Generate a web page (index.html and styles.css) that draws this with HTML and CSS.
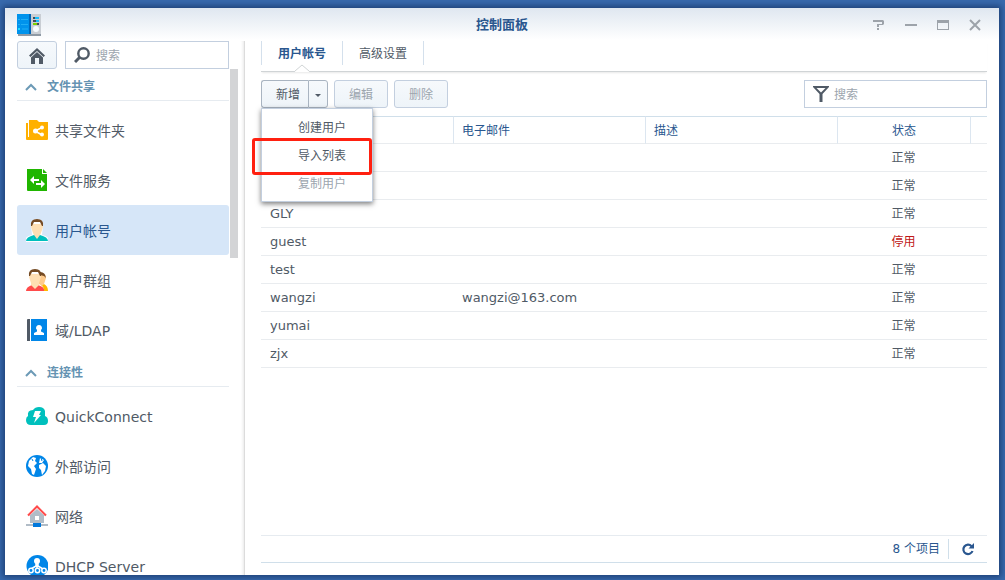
FILE: index.html
```html
<!DOCTYPE html>
<html lang="zh-CN">
<head>
<meta charset="utf-8">
<title>控制面板</title>
<link rel="stylesheet" href="styles.css">
</head>
<body>
<div class="window">
  <header class="titlebar">
    <svg class="app-icon" width="25" height="22" viewBox="0 0 25 22">
      <path d="M1 20h23v2H1z" fill="#8f9aa5"/>
      <path d="M0 0h14v20H0z" fill="#0093ec"/><path d="M12 0h2v20h-2z" fill="#0067b8"/>
      <path d="M1 5.500h2M4 5.500h7M1 10.500h2M4 10.500h7M5 15h6" stroke="#20aef5" stroke-width="1"/><path d="M1 14h2v2H1z" fill="#1ddcff"/>
      <path d="M14 0h10v20H14z" fill="#c9ced4"/>
      <path d="M16 4h6M16 7h6M16 10h6" stroke="#424d59" stroke-width="2"/>
      <path d="M18 4h4M19 7h3" stroke="#13bfff" stroke-width="2"/><path d="M16 10h4" stroke="#7ad000" stroke-width="2"/>
      <circle cx="19" cy="15" r="3" fill="#f5fbff"/>
    </svg>
    <h1 class="title">控制面板</h1>
    <div class="window-controls">
      <button class="control" aria-label="帮助"><svg width="12" height="12" viewBox="0 0 12 12"><path d="M0 1h10l1 1v3l-1 1H6v2H4V5h5V3H0zM4 9h2v2H4z" fill="#9da3aa"/></svg></button>
      <button class="control" aria-label="最小化"><svg width="12" height="12" viewBox="0 0 12 12"><path d="M0 6h12" stroke="#9da3aa" stroke-width="2"/></svg></button>
      <button class="control" aria-label="最大化"><svg width="12" height="12" viewBox="0 0 12 12"><path d="M0 1h12v10H0zM1 4v6h10V4z" fill="#9da3aa" fill-rule="evenodd"/></svg></button>
      <button class="control" aria-label="关闭"><svg width="12" height="12" viewBox="0 0 12 12"><path d="M1 1l10 10M11 1L1 11" stroke="#9da3aa" stroke-width="2"/></svg></button>
    </div>
  </header>
  <div class="content">
    <aside class="sidebar">
      <div class="side-tools">
        <button class="button home" aria-label="主页"><svg width="16" height="16" viewBox="0 0 16 16"><path d="M8 0l8 7.500-1.500 1.500L8 3 1.500 9 0 7.500z" fill="#505a66"/><path d="M8 4l6 5.500V16h-4v-6H6v6H2V9.500z" fill="#505a66"/></svg></button>
        <label class="search">
          <svg width="16" height="16" viewBox="0 0 16 16"><circle cx="9.500" cy="6.500" r="5.200" fill="none" stroke="#505a66" stroke-width="2.400"/><path d="M5.500 10.500L1 15" stroke="#505a66" stroke-width="3"/></svg>
          <input type="text" placeholder="搜索" aria-label="搜索设置">
        </label>
      </div>
      <div class="side-scroll">
        <nav class="side-list">
          <button class="group"><svg width="12" height="8" viewBox="0 0 12 8"><path d="M1 7l5-5 5 5" fill="none" stroke="#6c9ab6" stroke-width="2"/></svg>文件共享</button>
          <ul class="items">
            <li><a class="item" href="#share"><svg width="22" height="22" viewBox="0 0 22 22"><path d="M0 4h2v16H0zM3 1h8l2 2h9v17q0 1-1 1H3z" fill="#ffb000"/><path d="M0 18h3v3H1q-1 0-1-1z" fill="#ffb000"/><path d="M16 8.500L9 12l7 4" fill="none" stroke="#fff" stroke-width="1.500"/><circle cx="9.500" cy="12" r="2.500" fill="#fff"/><circle cx="16" cy="8.500" r="2" fill="#fff"/><circle cx="16" cy="15.500" r="2" fill="#fff"/></svg>共享文件夹</a></li>
            <li><a class="item" href="#files"><svg width="22" height="22" viewBox="0 0 22 22"><path d="M1 0h15v5h5v17H2q-1 0-1-1z" fill="#20b600"/><path d="M17 0l4 4h-4z" fill="#20b600"/><path d="M4 11l4-4v3h5v2H8v3zM19 15l-4-4v3h-5v2h5v3z" fill="#fff"/></svg>文件服务</a></li>
            <li><a class="item selected" href="#users" aria-current="page"><svg width="22" height="24" viewBox="0 0 22 24"><path d="M-1 24v-3q2-3 7-4L5 7q0-6 6-6t6 6l-1 10q5 1 7 4v3z" fill="#fff"/><path d="M0 23q0-4 8-6h6q8 2 8 6z" fill="#00bfbd"/><path d="M6 6h10l1 3-2 6-1 2-3 4-3-4-1-2-2-6z" fill="#ffdfb3"/><path d="M5 8q-1-7 6-7t6 7h-1l-2-4H8L6 8z" fill="#754b24"/></svg>用户帐号</a></li>
            <li><a class="item" href="#groups"><svg width="22" height="24" viewBox="0 0 22 24"><path d="M15 17l3-1q4 2 4 7h-4q0-4-3-6z" fill="#ffb700"/><path d="M13 6h6l1 4-2 6-2 2-3-2z" fill="#ffcb8c"/><path d="M13 4q6-1 7 6l-2-2-4-1z" fill="#754b24"/><path d="M0 23q0-4 6-6h6q7 2 6 6z" fill="#ff4b4b"/><path d="M4 6h10l1 3-2 6v2l-4 4-4-4v-2L3 9z" fill="#ffdfb3"/><path d="M3 8Q2 1 9 1t6 7h-1l-2-4H6L4 8z" fill="#754b24"/></svg>用户群组</a></li>
            <li><a class="item" href="#ldap"><svg width="22" height="22" viewBox="0 0 22 22"><path d="M2 0h2v22H1V1q0-1 1-1z" fill="#505a66"/><path d="M5 0h16v22H5z" fill="#0086e8"/><path d="M8 16v-2l3-1.500v-1.500l-1-1.500q0-3.500 3-3.500t3 3.500l-1 1.500v1.500l3 1.500v2z" fill="#fff"/></svg>域/LDAP</a></li>
          </ul>
          <button class="group"><svg width="12" height="8" viewBox="0 0 12 8"><path d="M1 7l5-5 5 5" fill="none" stroke="#6c9ab6" stroke-width="2"/></svg>连接性</button>
          <ul class="items">
            <li><a class="item" href="#quickconnect"><svg width="22" height="20" viewBox="0 0 22 20"><path d="M5 19q-5 0-5-5 0-3 2-4Q1 4 7 4q2-3 6-3 5 0 6 4v5q3 1 3 5 0 4-4 4z" fill="#00c0bd"/><path d="M9 5h6l-2 4h2l-7 8 2-6H7z" fill="#fff"/></svg>QuickConnect</a></li>
            <li><a class="item" href="#external"><svg width="22" height="22" viewBox="0 0 22 22"><circle cx="11" cy="11" r="11" fill="#0086e8"/><path d="M3 6l4-4 3 1-1 3 2 2-3 3 2 3-2 6-2-1-1-5-3-3zM14 3l4 2-2 3h-3zM13 10l4-2 3 3-1 5-3 4-1-5-2-2z" fill="#fff"/><path d="M6 4l1 2M15 3l1 3" stroke="#0086e8"/></svg>外部访问</a></li>
            <li><a class="item" href="#network"><svg width="22" height="22" viewBox="0 0 22 22"><path d="M11 4l8 7h-1v7H4v-7H3z" fill="#b1bcc7"/><path d="M9 11h4v4H9z" fill="#fff"/><path d="M2 10.500l9-9 9 9" fill="none" stroke="#ff4b4b" stroke-width="2"/><path d="M0 20h22" stroke="#b1bcc7" stroke-width="2"/><path d="M7 18h8v4H7z" fill="#0078dc"/></svg>网络</a></li>
            <li><a class="item" href="#dhcp"><svg width="22" height="22" viewBox="0 0 22 22"><circle cx="11.500" cy="11" r="11" fill="#0086e8"/><circle cx="11" cy="6" r="3" fill="#fff"/><path d="M10 7v4l-5 3M12 7v4l5 3M11 7v8" fill="none" stroke="#fff" stroke-width="1.500"/><g fill="#0086e8" stroke="#fff" stroke-width="1.500"><circle cx="5" cy="15.500" r="2.200"/><circle cx="11.500" cy="15.500" r="2.200"/><circle cx="18" cy="15.500" r="2.200"/></g></svg>DHCP Server</a></li>
          </ul>
        </nav>
        <div class="scroll-thumb"></div>
      </div>
    </aside>
    <main class="main">
      <div class="tabs" role="tablist">
        <button class="tab active" role="tab" aria-selected="true">用户帐号<svg class="notch" width="14" height="8" viewBox="0 0 14 8"><path d="M0 7l7-6 7 6v1H0z" fill="#fff"/><path d="M0 7l7-6 7 6" fill="none" stroke="#d0d4d6"/></svg></button>
        <button class="tab" role="tab" aria-selected="false">高级设置</button>
      </div>
      <div class="toolbar">
        <div class="split">
          <button class="button create">新增</button><button class="button arrow" aria-label="更多" aria-expanded="true"><svg width="6" height="3" viewBox="0 0 6 3"><path d="M0 0h6L3 3z" fill="#505a66"/></svg></button>
          <div class="menu">
            <button class="menu-item">创建用户</button>
            <button class="menu-item marked">导入列表</button>
            <button class="menu-item" disabled>复制用户</button>
          </div>
        </div>
        <button class="button" disabled>编辑</button>
        <button class="button" disabled>删除</button>
        <label class="search filter">
          <svg width="16" height="16" viewBox="0 0 16 16"><path d="M0 0h16v1L9.500 8v8h-3V8L0 1z" fill="#505a66"/><path d="M3.500 2h9L8 6.500z" fill="#fff"/></svg>
          <input type="text" placeholder="搜索" aria-label="搜索用户">
        </label>
      </div>
      <div class="grid">
        <table class="users">
          <colgroup><col><col><col><col class="status-col"><col class="end-col"></colgroup>
          <thead><tr><th></th><th>电子邮件</th><th>描述</th><th class="status">状态</th><th></th></tr></thead>
          <tbody>
            <tr><td></td><td></td><td></td><td class="status">正常</td><td></td></tr>
            <tr><td></td><td></td><td></td><td class="status">正常</td><td></td></tr>
            <tr><td>GLY</td><td></td><td></td><td class="status">正常</td><td></td></tr>
            <tr><td>guest</td><td></td><td></td><td class="status off">停用</td><td></td></tr>
            <tr><td>test</td><td></td><td></td><td class="status">正常</td><td></td></tr>
            <tr><td>wangzi</td><td>wangzi@163.com</td><td></td><td class="status">正常</td><td></td></tr>
            <tr><td>yumai</td><td></td><td></td><td class="status">正常</td><td></td></tr>
            <tr><td>zjx</td><td></td><td></td><td class="status">正常</td><td></td></tr>
          </tbody>
        </table>
      </div>
      <footer class="pager">
        <span class="count">8 个项目</span>
        <button class="refresh" aria-label="刷新"><svg width="14" height="14" viewBox="0 0 14 14"><path d="M10.500 4.200A4.700 4.700 0 1 0 11.500 9" fill="none" stroke="#2a578f" stroke-width="2.200"/><path d="M13 1v5.500H7.500z" fill="#2a578f"/></svg></button>
      </footer>
    </main>
  </div>
</div>
</body>
</html>
```
FILE: styles.css
```css
* { box-sizing: border-box; }
body {
  margin: 0;
  height: 100vh;
  padding: 8px 6px 5px 5px;
  background: #386aad;
  font: 12px/16px "DejaVu Sans", "Noto Sans CJK SC", sans-serif;
  color: #505a66;
}
button, input { font: inherit; color: inherit; margin: 0; padding: 0; border: 0; background: none; }
svg { display: block; flex: none; }

.window {
  height: 100%;
  display: flex;
  flex-direction: column;
  background: linear-gradient(#dfe7f0, #fff 32px);
  box-shadow: 0 0 6px 2px rgba(10, 35, 80, .6);
  overflow: hidden;
}
.titlebar {
  display: grid;
  grid-template-columns: 1fr auto 1fr;
  align-items: center;
  height: 33px;
  padding: 0 12px;
  flex: none;
}
.title { margin: 0; font-size: 13px; line-height: 16px; font-weight: 700; color: #2a578f; }
.window-controls { display: flex; justify-content: flex-end; gap: 20px; padding-right: 6px; }
.content { display: flex; flex: 1; min-height: 0; }

.sidebar {
  display: flex;
  flex-direction: column;
  width: 240px;
  flex: none;
  padding-left: 12px;
  border-right: 1px solid #dcdcdc;
  box-shadow: inset -3px 0 3px -2px #e8e8e8;
}
.side-tools { display: flex; gap: 8px; padding-right: 15px; flex: none; }
.button {
  height: 28px;
  min-width: 54px;
  display: flex;
  align-items: center;
  justify-content: center;
  padding-top: 2px;
  border: 1px solid #c3cfdf;
  border-radius: 3px;
  background: linear-gradient(#f6f9fc, #eef4f9);
}
.button:disabled { color: #9ca5ae; }
.button.home { min-width: 40px; }
.search {
  display: flex;
  align-items: center;
  gap: 6px;
  flex: 1;
  min-width: 0;
  height: 28px;
  padding: 0 8px;
  border: 1px solid #c3cfdf;
  background: #fff;
}
.search input { flex: 1; width: 0; min-width: 0; padding-top: 2px; outline: 0; }
.search input::placeholder { color: #9ca5ae; opacity: 1; }

.side-scroll { display: flex; gap: 1px; flex: 1; min-height: 0; overflow: hidden; }
.side-list { flex: 1; }
.scroll-thumb { width: 8px; height: 189px; margin-right: 6px; background: #d3d4d6; }
.group {
  display: flex;
  align-items: center;
  gap: 10px;
  width: 100%;
  height: 32px;
  padding: 5px 8px 0;
  border-bottom: 1px solid #e6ebf0;
  color: #6593b2;
  font-weight: 700;
}
.items { list-style: none; margin: 0; padding: 4px 0 0; }
.item {
  display: flex;
  align-items: center;
  gap: 7px;
  height: 50px;
  padding: 2px 0 0 9px;
  border-radius: 3px;
  font-size: 14px;
  color: inherit;
  text-decoration: none;
}
.item svg { margin-bottom: 2px; }
.item.selected { background: #d6e6f8; color: #2a578f; }

.main { flex: 1; min-width: 0; display: flex; flex-direction: column; padding: 0 12px 12px 16px; }
.tabs { display: flex; height: 31px; border-bottom: 1px solid #d0d4d6; box-shadow: 0 2px 2px -1px #e8e8e8; flex: none; }
.tab { position: relative; height: 24px; padding: 2px 16px 0; border-right: 1px solid #d4e0ec; }
.tab.active { border-left: 1px solid #d4e0ec; color: #2a578f; font-weight: 700; }
.notch { position: absolute; left: 50%; margin-left: -7px; bottom: -7px; }
.toolbar { display: flex; gap: 6px; padding: 8px 0; flex: none; }
.split { position: relative; display: flex; }
.split .button { border-color: #a9b4c1; }
.create { border-radius: 3px 0 0 3px; border-right: 0; min-width: 47px; padding-left: 6px; }
.button.arrow { min-width: 20px; border-radius: 0 3px 3px 0; }
.menu {
  position: absolute;
  top: 100%;
  left: 0;
  z-index: 1;
  width: 112px;
  padding: 4px 0;
  border: 1px solid #c3cfdf;
  background: #fff;
  box-shadow: 0 2px 5px rgba(0, 0, 0, .5);
}
.menu-item { position: relative; display: block; width: 100%; height: 28px; padding: 2px 0 0 36px; text-align: left; }
.menu-item:disabled { color: #9ca5ae; }
.marked::after {
  content: "";
  position: absolute;
  z-index: 1;
  inset: -3px 0 -6px -10px;
  border: 3px solid #ff2010;
  border-radius: 3px;
}
.search.filter { flex: 0 1 183px; margin-left: auto; gap: 5px; }

.grid { flex: 1; min-height: 0; overflow: hidden; }
.users { width: 100%; table-layout: fixed; border-collapse: separate; border-spacing: 0; }
.status-col { width: 133px; }
.end-col { width: 17px; }
.users th, .users td { height: 28px; border-bottom: 1px solid #e9ecef; text-align: left; }
.users td { padding: 0 9px; font-size: 13px; }
.users th { padding: 1px 8px 0; border-top: 1px solid #d0dfea; border-left: 1px solid #dce6f0; color: #2a578f; font-weight: 400; }
.users th:first-child { border-left: 0; }
.users .status { text-align: center; font-size: 12px; }
.users .off { color: #c01818; }
.pager {
  display: flex;
  align-items: center;
  justify-content: flex-end;
  height: 28px;
  border-top: 1px solid #e6ebf0;
  border-bottom: 1px solid #d0dfea;
  color: #2a578f;
  flex: none;
}
.refresh { height: 20px; margin-left: 8px; padding: 0 12px; border-left: 1px solid #d0dfea; }
```
